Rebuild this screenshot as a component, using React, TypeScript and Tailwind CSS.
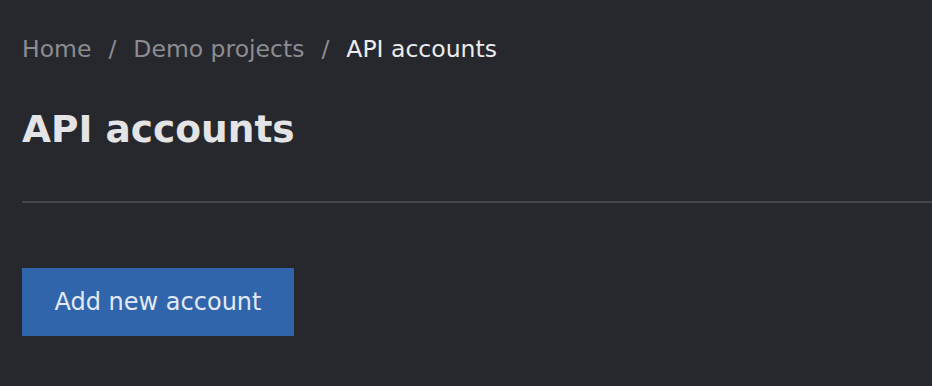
import React from 'react';

const App: React.FC = () => {
  return (
    <div className="min-h-[386px] w-full bg-[#27282d] pl-[22px] pt-[33px] font-['DejaVu_Sans',sans-serif]">
      {/* Breadcrumb */}
      <nav className="flex items-center gap-[17px] text-[23.5px] leading-8 text-[#8c8d92]">
        <span>Home</span>
        <span>/</span>
        <span>Demo projects</span>
        <span>/</span>
        <span className="text-[#ececee]">API accounts</span>
      </nav>

      <h1 className="mt-[40px] text-[37.5px] font-bold leading-[48px] text-[#e4e4e6]">API accounts</h1>

      <div className="mt-[48px] h-[2px] bg-[#45464b]" />

      <button className="mt-[65px] h-[68px] w-[272px] bg-[#3165ab] text-[24px] text-[#e3e9f3]">
        Add new account
      </button>
    </div>
  );
};

export default App;
